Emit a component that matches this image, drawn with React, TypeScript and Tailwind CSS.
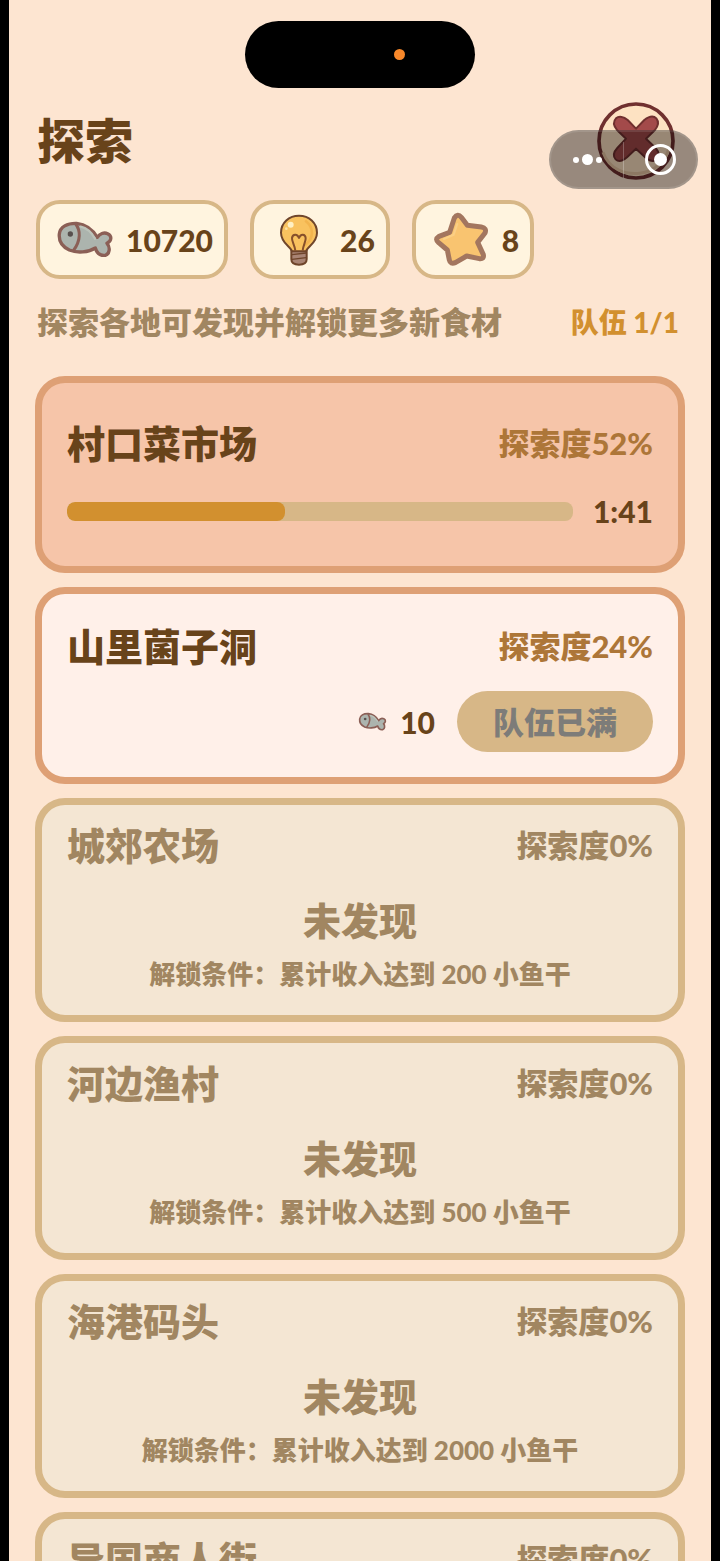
import type { ReactNode } from 'react';

interface Place {
  name: string;
  explored: number;
  state: 'running' | 'ready' | 'locked';
  progress?: number;
  timeLeft?: string;
  cost?: number;
  income?: number;
}

const PLACES: Place[] = [
  { name: '村口菜市场', explored: 52, state: 'running', progress: 43, timeLeft: '1:41' },
  { name: '山里菌子洞', explored: 24, state: 'ready', cost: 10 },
  { name: '城郊农场', explored: 0, state: 'locked', income: 200 },
  { name: '河边渔村', explored: 0, state: 'locked', income: 500 },
  { name: '海港码头', explored: 0, state: 'locked', income: 2000 },
  { name: '异国商人街', explored: 0, state: 'locked', income: 5000 },
];

const CARD_STYLE: Record<Place['state'], string> = {
  running: 'border-[#dea075] bg-[#f6c5a9] pt-9 pb-[39px]',
  ready: 'border-[#dea075] bg-[#fff0e9] pt-7 pb-[25px]',
  locked: 'border-[#d7b787] bg-[#f4e6d3] pt-4 pb-[23px]',
};

function FishIcon({ className }: { className: string }) {
  return (
    <svg viewBox="78 88 180 120" className={className} aria-hidden="true">
      <path
        d="M88 130C90 109 112 97 140 98C168 101 188 117 202 140C209 129 222 124 233 129C246 135 246 150 231 158C241 169 240 190 226 194C210 196 200 186 196 172C176 185 142 188 118 178C97 168 86 150 88 130Z"
        fill="#acb4ae"
        stroke="#8b5f56"
        strokeWidth="10"
        strokeLinejoin="round"
      />
      <path d="M152 108C170 112 184 124 195 144" fill="none" stroke="#bcc3ba" strokeWidth="7" strokeLinecap="round" />
      <path d="M137 100C151 118 154 148 130 180" fill="none" stroke="#8b5f56" strokeWidth="9" />
      <circle cx="121" cy="130" r="8" fill="#57504e" />
    </svg>
  );
}

function BulbIcon({ className }: { className: string }) {
  return (
    <svg viewBox="90 58 180 180" className={className} aria-hidden="true">
      <path
        d="M154 178H200V206C200 217 191 222 177 222C163 222 154 217 154 206Z"
        fill="#a98474"
        stroke="#6f452b"
        strokeWidth="6"
      />
      <path
        d="M156 182C153 168 123 158 123 126C123 96 147 75 177 75C207 75 231 96 231 126C231 158 201 168 198 182Z"
        fill="#f9c25f"
        stroke="#6f452b"
        strokeWidth="6"
        strokeLinejoin="round"
      />
      <path d="M198 92C222 112 222 142 196 162" fill="none" stroke="#f3b44e" strokeWidth="8" strokeLinecap="round" />
      <circle cx="152" cy="102" r="9" fill="#fff0c4" />
      <circle cx="139" cy="114" r="4" fill="#fde3a5" />
      <path
        d="M166 180C164 162 155 152 156 142C158 130 172 128 177 142C182 128 196 130 197 142C198 152 190 162 188 180"
        fill="none"
        stroke="#87502b"
        strokeWidth="6"
        strokeLinejoin="round"
      />
      <path d="M156 192L198 187M156 206L198 201" stroke="#6f452b" strokeWidth="4" />
    </svg>
  );
}

function StarIcon({ className }: { className: string }) {
  return (
    <svg viewBox="576 58 180 180" className={className} aria-hidden="true">
      <path
        d="M643 82Q653 67 664 80L682 104L724 109Q741 112 735 127L713 155L730 192Q733 206 718 204L680 196L646 216Q631 222 628 208L622 178L596 156Q583 146 597 137L629 125Z"
        fill="#f9c470"
        stroke="#a3765f"
        strokeWidth="15"
        strokeLinejoin="round"
      />
      <path d="M652 100L641 132L612 145" fill="none" stroke="#fbcf85" strokeWidth="6" strokeLinecap="round" />
    </svg>
  );
}

function CloseIcon({ className }: { className: string }) {
  return (
    <svg viewBox="172 34 234 234" className={className} aria-hidden="true">
      <circle cx="289" cy="151" r="111" fill="#fde2c2" stroke="#70302f" strokeWidth="11" />
      <path d="M190 185C210 240 260 252 300 248C345 243 380 210 388 170" fill="none" stroke="#ecc9a5" strokeWidth="9" />
      <path
        d="M289 114L314 88C328 77 342 75 350 83C358 93 355 107 345 119L319 144L348 172C359 185 360 199 351 207C342 214 330 211 318 201L289 174L262 200C249 211 236 214 228 206C220 197 222 184 233 172L259 144L232 118C222 105 220 92 229 83C238 75 252 78 264 88Z"
        fill="#a34a4a"
        stroke="#70302f"
        strokeWidth="6"
        strokeLinejoin="round"
      />
    </svg>
  );
}

function Chip({ icon, value }: { icon: ReactNode; value: number }) {
  return (
    <div className="flex h-[79px] items-center gap-2.5 rounded-3xl border-4 border-[#d7b787] bg-[#fff4df] pl-4 pr-[11px]">
      <span className="flex w-[60px] justify-center">{icon}</span>
      <span className="text-[30px] leading-9 text-[#68431a]">{value}</span>
    </div>
  );
}

function PlaceCard({ place }: { place: Place }) {
  const locked = place.state === 'locked';
  return (
    <li className={`shrink-0 rounded-[30px] border-[7px] px-[25px] ${CARD_STYLE[place.state]}`}>
      <div className="flex items-center justify-between">
        <h2 className={`text-[38px] leading-[48px] ${locked ? 'text-[#a18661]' : 'text-[#68431a]'}`}>
          {place.name}
        </h2>
        <span className={`text-[31px] leading-[48px] ${locked ? 'text-[#a18661]' : 'text-[#ad7638]'}`}>
          探索度{place.explored}%
        </span>
      </div>

      {place.state === 'running' && (
        <div className="mt-7 flex items-center gap-5">
          <div
            role="progressbar"
            aria-label={place.name}
            aria-valuenow={place.progress}
            className="h-[19px] flex-1 overflow-hidden rounded-lg bg-[#d7b787]"
          >
            <div className="h-full rounded-lg bg-[#d2902f]" style={{ width: `${place.progress}%` }} />
          </div>
          <span className="text-[30px] leading-8 text-[#68431a]">{place.timeLeft}</span>
        </div>
      )}

      {place.state === 'ready' && (
        <div className="mt-[21px] flex items-center justify-end">
          <FishIcon className="h-5 w-[30px]" />
          <span className="ml-3 text-[30px] leading-9 text-[#68431a]">{place.cost}</span>
          <button
            type="button"
            disabled
            className="ml-[22px] h-[61px] rounded-full bg-[#d7b787] px-9 text-[31px] leading-9 text-[#7d7c79]"
          >
            队伍已满
          </button>
        </div>
      )}

      {locked && (
        <div className="text-center">
          <p className="mt-[27px] text-[38px] leading-[48px] text-[#a18661]">未发现</p>
          <p className="mt-3 text-[26px] leading-9 text-[#a18661]">
            解锁条件：累计收入达到 {place.income} 小鱼干
          </p>
        </div>
      )}
    </li>
  );
}

export default function App() {
  return (
    <div className="h-screen bg-black px-[9px] font-['Lato','Noto_Sans_CJK_SC',sans-serif] font-black">
      <main className="relative flex h-full flex-col overflow-hidden bg-[#fde5d1] px-[26px]">
        {/* Camera island */}
        <div className="mx-auto mt-[21px] flex h-[67px] w-[230px] shrink-0 items-center justify-end rounded-full bg-black pr-[70px]">
          <span className="size-[11px] rounded-full bg-[#f8882a]" />
        </div>

        <header className="mt-[14px] flex shrink-0 items-center justify-between pl-0.5 pr-[10px]">
          <h1 className="text-[48px] leading-[60px] text-[#68431a]">探索</h1>
          <button type="button" aria-label="关闭">
            <CloseIcon className="size-[78px]" />
          </button>
        </header>

        {/* Mini-program capsule, floats over the close button */}
        <div className="absolute right-[13px] top-[130px] flex h-[59px] w-[149px] items-center rounded-full border-2 border-white/10 bg-black/40">
          <button type="button" aria-label="更多" className="flex h-full flex-1 items-center justify-center gap-[3px]">
            <span className="size-1.5 rounded-full bg-white" />
            <span className="size-[11px] rounded-full bg-white" />
            <span className="size-1.5 rounded-full bg-white" />
          </button>
          <span className="h-9 w-px bg-white/25" />
          <button type="button" aria-label="退出" className="flex h-full flex-1 items-center justify-center">
            <span className="flex size-[31px] items-center justify-center rounded-full border-[3px] border-white">
              <span className="size-[13px] rounded-full bg-white" />
            </span>
          </button>
        </div>

        <div className="mt-5 flex shrink-0 gap-[22px] pl-px">
          <Chip icon={<FishIcon className="h-10 w-[60px]" />} value={10720} />
          <Chip icon={<BulbIcon className="size-[60px]" />} value={26} />
          <Chip icon={<StarIcon className="size-[60px]" />} value={8} />
        </div>

        <div className="mt-[23px] flex shrink-0 items-center justify-between pl-0.5 pr-1.5 leading-10">
          <p className="text-[31px] text-[#a18661]">探索各地可发现并解锁更多新食材</p>
          <p className="text-[28px] text-[#d2902f]">队伍 1/1</p>
        </div>

        <ul className="mt-[34px] flex min-h-0 flex-1 flex-col gap-[14px] overflow-hidden">
          {PLACES.map((place) => (
            <PlaceCard key={place.name} place={place} />
          ))}
        </ul>
      </main>
    </div>
  );
}
